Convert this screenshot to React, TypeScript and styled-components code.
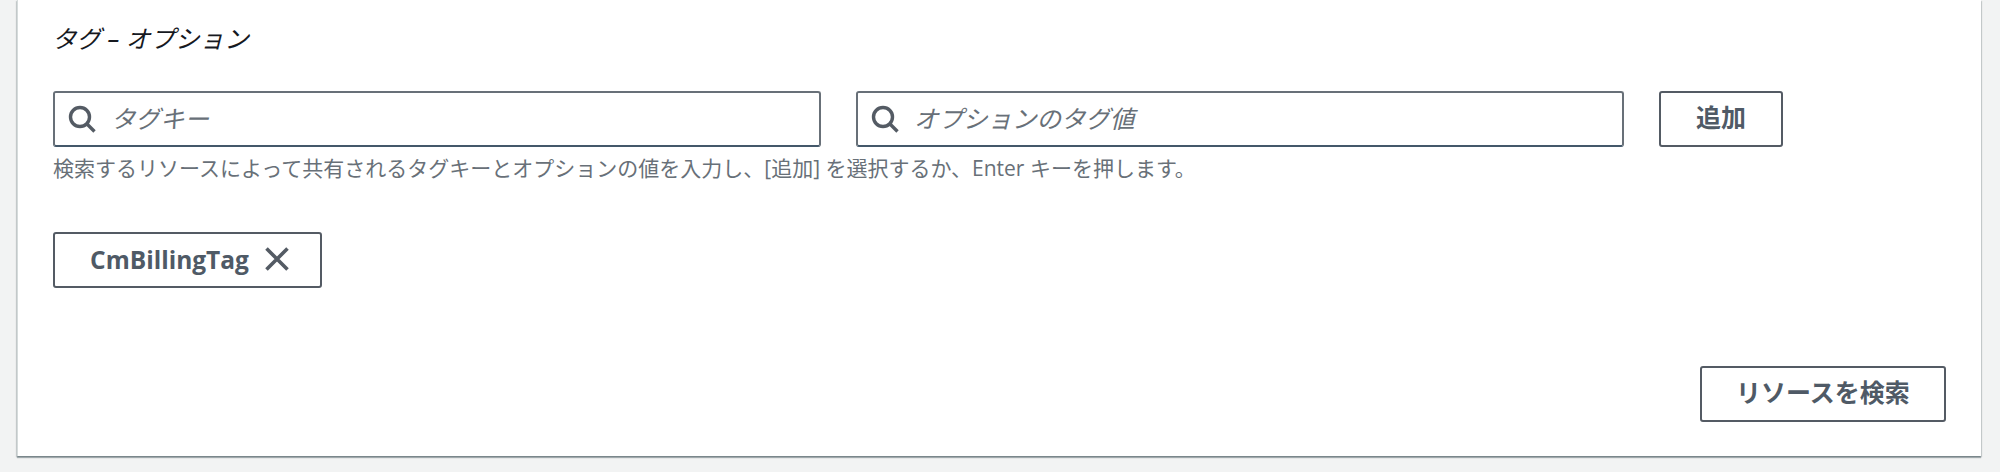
import React from "react";
import styled, { createGlobalStyle } from "styled-components";

const FONT = `"Open Sans", "Noto Sans CJK JP", sans-serif`;

const Global = createGlobalStyle`
  html, body { margin: 0; padding: 0; background: #f2f3f3; }
  body { font-family: ${FONT}; }
`;

const Page = styled.div`
  width: 2000px;
  height: 472px;
  padding: 0 19px 0 17px;
  box-sizing: border-box;
  overflow: hidden;
`;

const Panel = styled.section`
  height: 456px;
  box-sizing: border-box;
  background: #fff;
  border-left: 1px solid #d5dbdb;
  box-shadow: 0 2px 1px rgba(0, 28, 36, 0.3), 1px 1px 1px rgba(0, 28, 36, 0.15), -1px 1px 1px rgba(0, 28, 36, 0.15);
  padding: 22px 35px 0 35px;
  display: flex;
  flex-direction: column;
`;

const Title = styled.h2`
  margin: 0 0 0 -1px;
  font-size: 24.6px;
  line-height: 34px;
  font-weight: 400;
  font-style: italic;
  color: #16191f;
`;

const SearchRow = styled.div`
  display: flex;
  margin-top: 35px;
  gap: 35px;
  align-items: stretch;
`;

const InputBox = styled.div`
  width: 768px;
  height: 56px;
  box-sizing: border-box;
  border: 2px solid #687078;
  border-bottom-color: #44586a;
  border-radius: 3px;
  display: flex;
  align-items: center;
  padding-left: 13px;
  gap: 15px;
`;

const Placeholder = styled.span`
  font-size: 24.5px;
  font-style: italic;
  color: #687078;
  line-height: 1;
  padding-top: 1px;
`;

const Button = styled.button`
  height: 56px;
  box-sizing: border-box;
  background: #fff;
  border: 2px solid #545b64;
  border-radius: 3px;
  font-family: ${FONT};
  font-size: 25px;
  font-weight: 700;
  color: #4f5a66;
  display: inline-flex;
  align-items: center;
  justify-content: center;
  padding: 0 0 7px;
`;

const AddButton = styled(Button)`
  width: 124px;
`;

const Help = styled.p`
  margin: 6px 0 0;
  font-size: 21px;
  line-height: 30px;
  color: #687078;
`;

const TokenRow = styled.div`
  margin-top: 49px;
  display: flex;
`;

const Token = styled(Button)`
  width: 269px;
  gap: 16px;
  padding: 0 0 2px 4px;
  font-size: 24.5px;
`;

const Footer = styled.div`
  margin-top: 78px;
  display: flex;
  justify-content: flex-end;
`;

const SearchButton = styled(Button)`
  width: 246px;
`;

const SearchIcon = () => (
  <svg width="28" height="28" viewBox="0 0 28 28" fill="none" stroke="#545b64" strokeWidth="3.4">
    <circle cx="12" cy="12" r="9.5" />
    <path d="M19 19l7.5 7.5" />
  </svg>
);

const CloseIcon = () => (
  <svg width="24" height="24" viewBox="0 0 24 24" fill="none" stroke="#545b64" strokeWidth="3.6">
    <path d="M1.5 1.5l21 21M22.5 1.5l-21 21" />
  </svg>
);

export default function App() {
  return (
    <>
      <Global />
      <Page>
        <Panel>
          <Title>タグ – オプション</Title>
          <SearchRow>
            <InputBox>
              <SearchIcon />
              <Placeholder>タグキー</Placeholder>
            </InputBox>
            <InputBox>
              <SearchIcon />
              <Placeholder>オプションのタグ値</Placeholder>
            </InputBox>
            <AddButton>追加</AddButton>
          </SearchRow>
          <Help>検索するリソースによって共有されるタグキーとオプションの値を入力し、[追加] を選択するか、Enter キーを押します。</Help>
          <TokenRow>
            <Token>
              CmBillingTag
              <CloseIcon />
            </Token>
          </TokenRow>
          <Footer>
            <SearchButton>リソースを検索</SearchButton>
          </Footer>
        </Panel>
      </Page>
    </>
  );
}
